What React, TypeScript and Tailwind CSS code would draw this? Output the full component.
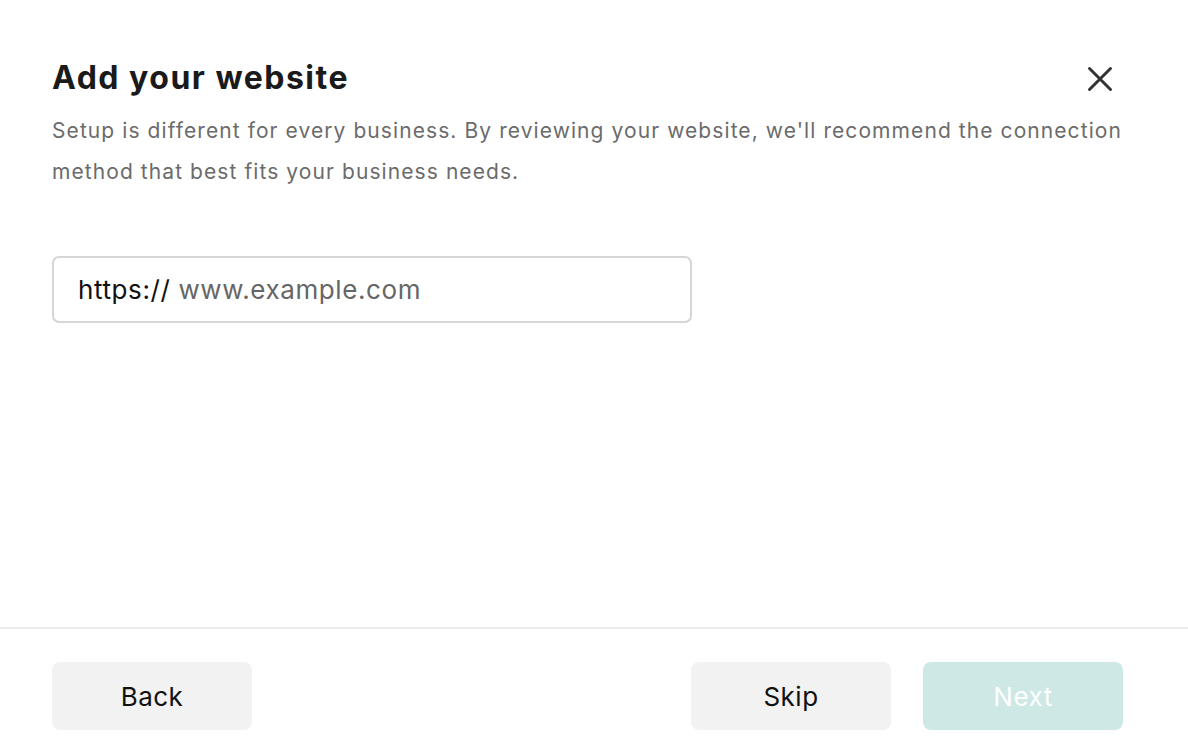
import React from "react";

export default function App() {
  return (
    <div className="w-[1188px] h-[752px] bg-white flex flex-col overflow-hidden" style={{ fontFamily: "Inter, 'Noto Sans', sans-serif" }}>
      <div className="flex-1 flex flex-col pl-[52px] pr-[60px] pt-[56px]">
        <div className="flex items-start justify-between">
          <h1 className="text-[32px] leading-[44px] font-bold text-[#1a1a1a] tracking-[1.5px]">Add your website</h1>
          <button className="mt-[10px] mr-[15px] w-[26px] h-[26px] flex items-center justify-center">
            <svg width="26" height="26" viewBox="0 0 26 26" fill="none" stroke="#333" strokeWidth="3" strokeLinecap="round">
              <path d="M2.5 2.5 L23.5 23.5 M23.5 2.5 L2.5 23.5" />
            </svg>
          </button>
        </div>
        <p className="mt-[10px] text-[21px] leading-[41px] text-[#6b6b6b] tracking-[1.08px]">
          Setup is different for every business. By reviewing your website, we'll recommend the connection method that best fits your business needs.
        </p>
        <div className="mt-[64px] w-[640px] h-[67px] border-2 border-[#d6d6d6] rounded-[7px] flex items-center px-[24px] text-[26px] tracking-[0.6px]">
          <span className="text-[#111]">https://</span>
          <span className="ml-[8px] text-[#666]">www.example.com</span>
        </div>
      </div>
      <div className="h-[2px] bg-[#ebebeb]" />
      <div className="h-[123px] flex items-start pt-[33px] pl-[52px] pr-[65px]">
        <button className="w-[200px] h-[68px] rounded-[8px] bg-[#f1f2f1] text-[26px] text-[#111] tracking-[0.5px]">Back</button>
        <div className="flex-1" />
        <button className="w-[200px] h-[68px] rounded-[8px] bg-[#f1f2f1] text-[26px] text-[#111] tracking-[0.5px]">Skip</button>
        <button className="ml-[32px] w-[200px] h-[68px] rounded-[8px] bg-[#cde8e5] text-[26px] text-white tracking-[0.5px]">Next</button>
      </div>
    </div>
  );
}
